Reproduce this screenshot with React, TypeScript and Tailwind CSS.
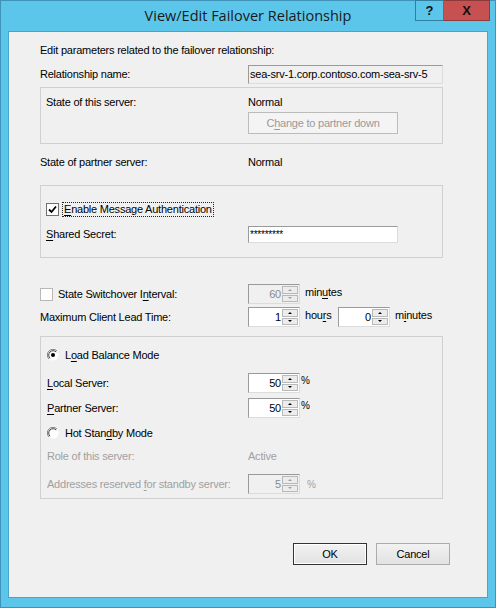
import React from "react";

const font = "font-['Liberation_Sans',Arial,sans-serif]";

function Spin({ value, disabled }: { value: string; disabled?: boolean }) {
  return (
    <div
      className={`flex h-[20px] w-[52px] items-stretch border border-[#9a9a9a] border-r-[#dcdcdc] border-b-[#dcdcdc] ${
        disabled ? "bg-[#f0f0f0] text-[#8a8a8a]" : "bg-white text-black"
      }`}
    >
      <div className="flex flex-1 items-center justify-end pr-[1px] leading-none">{value}</div>
      <div className="my-[1px] mr-[1px] flex w-[16px] flex-col gap-[1px]">
        <div className="flex flex-1 items-center justify-center border border-[#b9b9b9] bg-[#ececec]">
          <div className={`h-0 w-0 border-x-[2px] border-b-[2px] border-x-transparent ${disabled ? "border-b-[#a0a0a0]" : "border-b-black"}`} />
        </div>
        <div className="flex flex-1 items-center justify-center border border-[#b9b9b9] bg-[#ececec]">
          <div className={`h-0 w-0 border-x-[2px] border-t-[2px] border-x-transparent ${disabled ? "border-t-[#a0a0a0]" : "border-t-black"}`} />
        </div>
      </div>
    </div>
  );
}

function Check({ checked, dim }: { checked?: boolean; dim?: boolean }) {
  return (
    <div
      className={`flex h-[13px] w-[13px] items-center justify-center border bg-white ${
        dim ? "border-[#b8b8b8]" : "border-[#707070]"
      }`}
    >
      {checked && (
        <svg width="9" height="9" viewBox="0 0 9 9">
          <path d="M1 4.5 L3.5 7 L8 1.5" stroke="#000" strokeWidth="1.8" fill="none" />
        </svg>
      )}
    </div>
  );
}

function Radio({ checked }: { checked?: boolean }) {
  return (
    <svg width="12" height="12" viewBox="0 0 12 12">
      <circle cx="6" cy="6" r="5.5" fill="#fff" />
      <path d="M2 10 A5.5 5.5 0 0 1 10 2" stroke="#808080" strokeWidth="1" fill="none" />
      <path d="M3 9.2 A4.2 4.2 0 0 1 9.2 3" stroke="#404040" strokeWidth="1" fill="none" />
      {checked && <circle cx="6" cy="6" r="2" fill="#000" />}
    </svg>
  );
}

function U({ children }: { children: React.ReactNode }) {
  return <span className="underline underline-offset-[2px]">{children}</span>;
}

export default function App() {
  return (
    <div className={`${font} flex h-[608px] w-[496px] flex-col border border-[#3f93b8] bg-[#5cc6ea] text-[11px] tracking-[-0.22px] text-black`}>
      {/* Title bar */}
      <div className="relative flex h-[30px] items-center justify-center">
        <span className="font-['Open_Sans',sans-serif] text-[14.5px] leading-none tracking-normal text-[#1a1a1a]">View/Edit Failover Relationship</span>
        <div className="absolute right-[5px] top-[-1px] flex h-[21px] tracking-normal">
          <div className="flex w-[29px] items-center justify-center border border-[#2f7fa3] text-[13px] font-bold text-[#111]">?</div>
          <div className="flex w-[46px] items-center justify-center border border-l-0 border-[#8e3a3a] bg-[#c75050] text-[13px] font-bold text-[#111]">X</div>
        </div>
      </div>

      {/* Client area */}
      <div className="mx-[7px] flex h-[567px] flex-col border border-[#4aa3c8] bg-[#f0f0f0] pl-[31px] pt-[11px]">
        <div className="h-[14px] leading-[14px]">Edit parameters related to the failover relationship:</div>

        <div className="mt-[8px] flex h-[19px] items-center">
          <span className="w-[208px]">Relationship name:</span>
          <div className="flex h-[19px] w-[195px] items-center border border-[#9a9a9a] border-r-[#dcdcdc] border-b-[#dcdcdc] bg-[#f0f0f0] pl-[1px]">
            sea-srv-1.corp.contoso.com-sea-srv-5
          </div>
        </div>

        {/* Group: this server */}
        <div className="mt-[3px] flex h-[57px] w-[403px] flex-col border border-[#d0d0d0] pl-[5px] pt-[7px]">
          <div className="flex h-[14px] items-center">
            <span className="w-[202px]">State of this server:</span>
            <span>Normal</span>
          </div>
          <div className="ml-[202px] mt-[3px] flex h-[22px] w-[150px] items-center justify-center border border-[#bcbcbc] bg-[#f4f4f4] text-[#9a9a9a]">
            <span>
              C<U>h</U>ange to partner down
            </span>
          </div>
        </div>

        <div className="mt-[11px] flex h-[14px] items-center">
          <span className="w-[208px]">State of partner server:</span>
          <span>Normal</span>
        </div>

        {/* Group: authentication */}
        <div className="mt-[16px] flex h-[73px] w-[403px] flex-col border border-[#d0d0d0] pl-[5px] pt-[15px]">
          <div className="flex h-[16px] items-center">
            <Check checked />
            <span className="ml-[3px] border border-dotted border-[#222] px-[1px] leading-[13px]">
              <U>E</U>nable Message Authentication
            </span>
          </div>
          <div className="mt-[9px] flex h-[17px] items-center">
            <span className="w-[202px]">
              <U>S</U>hared Secret:
            </span>
            <div className="flex h-[17px] w-[150px] items-center border border-[#9a9a9a] border-r-[#dcdcdc] border-b-[#dcdcdc] bg-white pl-[1px] text-[10px] leading-none">
              *********
            </div>
          </div>
        </div>

        <div className="mt-[26px] flex h-[20px] items-center">
          <div className="flex w-[208px] items-center">
            <Check dim />
            <span className="ml-[5px]">
              State Switchover I<U>n</U>terval:
            </span>
          </div>
          <Spin value="60" disabled />
          <span className="ml-[5px] -mt-[4px]">
            min<U>u</U>tes
          </span>
        </div>

        <div className="mt-[3px] flex h-[20px] items-center">
          <span className="w-[208px]">Maximum Client Lead Time:</span>
          <Spin value="1" />
          <span className="ml-[5px] -mt-[3px] w-[33px]">
            hou<U>r</U>s
          </span>
          <Spin value="0" />
          <span className="ml-[5px] -mt-[3px]">
            m<U>i</U>nutes
          </span>
        </div>

        {/* Group: mode */}
        <div className="mt-[9px] flex h-[163px] w-[403px] flex-col border border-[#d0d0d0] pl-[6px] pt-[10px]">
          <div className="flex h-[16px] items-center">
            <Radio checked />
            <span className="ml-[6px]">
              L<U>o</U>ad Balance Mode
            </span>
          </div>
          <div className="mt-[10px] flex h-[20px] items-center">
            <span className="w-[201px]">
              <U>L</U>ocal Server:
            </span>
            <Spin value="50" />
            <span className="ml-[1px] -mt-[6px] text-[10px]">%</span>
          </div>
          <div className="mt-[5px] flex h-[20px] items-center">
            <span className="w-[201px]">
              <U>P</U>artner Server:
            </span>
            <Spin value="50" />
            <span className="ml-[1px] -mt-[6px] text-[10px]">%</span>
          </div>
          <div className="mt-[7px] flex h-[16px] items-center">
            <Radio />
            <span className="ml-[6px]">
              Hot Stan<U>d</U>by Mode
            </span>
          </div>
          <div className="mt-[8px] flex h-[14px] items-center text-[#a0a0a0]">
            <span className="w-[201px]">Role of this server:</span>
            <span>Active</span>
          </div>
          <div className="mt-[11px] flex h-[20px] items-center text-[#a0a0a0]">
            <span className="w-[201px]">
              Addresses reserved <U>f</U>or standby server:
            </span>
            <Spin value="5" disabled />
            <span className="ml-[7px] text-[10px]">%</span>
          </div>
        </div>

        {/* Buttons */}
        <div className="ml-[253px] mt-[44px] flex gap-[9px]">
          <button className="flex h-[22px] w-[74px] items-center justify-center border border-[#333] bg-gradient-to-b from-[#f2f2f2] to-[#e2e2e2] shadow-[inset_0_0_0_1px_#fff]">
            OK
          </button>
          <button className="flex h-[22px] w-[74px] items-center justify-center border border-[#acacac] bg-gradient-to-b from-[#f2f2f2] to-[#e2e2e2]">
            Cancel
          </button>
        </div>
      </div>
    </div>
  );
}
